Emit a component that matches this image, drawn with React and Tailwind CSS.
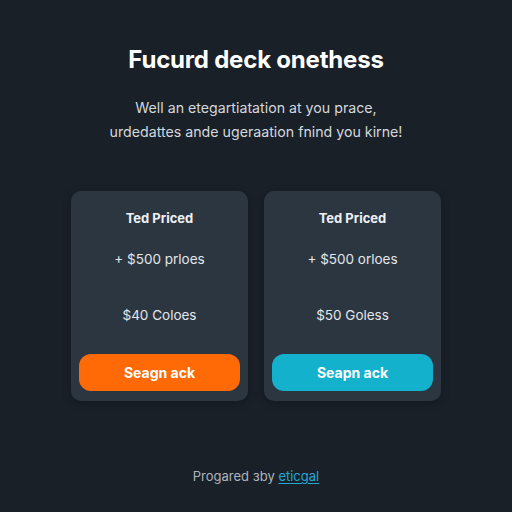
import React from 'react';

const plans = [
    { title: 'Ted Priced', line: '+ $500 prloes', price: '$40 Coloes', cta: 'Seagn ack', btn: 'bg-[#ff6a06]' },
    { title: 'Ted Priced', line: '+ $500 orloes', price: '$50 Goless', cta: 'Seapn ack', btn: 'bg-[#14b1cd]' },
];

const PlanCard = ({ plan }) => (
    <div className="w-[177px] h-[210px] rounded-[10px] bg-[#2c3641] flex flex-col items-center px-2 pb-[10px] shadow-[0_2px_8px_rgba(0,0,0,0.25)]">
        <div className="mt-[18px] text-[13px] font-bold text-[#eef1f4] leading-[18px]">{plan.title}</div>
        <div className="mt-[23px] text-[13.5px] text-[#e3e7eb] leading-[18px]">{plan.line}</div>
        <div className="mt-[38px] text-[13.5px] text-[#e3e7eb] leading-[18px]">{plan.price}</div>
        <button className={`mt-auto w-full h-[37px] rounded-[12px] ${plan.btn} text-white text-[14px] font-bold`}>
            {plan.cta}
        </button>
    </div>
);

export default function App() {
    return (
        <div className="w-[512px] h-[512px] bg-[#1a2028] flex flex-col items-center font-['Inter',sans-serif]">
            <h1 className="mt-[44px] text-[24px] font-bold text-white leading-[32px] tracking-[-0.2px]">Fucurd deck onethess</h1>
            <p className="mt-[20px] text-[14.2px] text-[#d4d9de] text-center leading-[24px]">
                Well an etegartiatation at you prace,<br />
                urdedattes ande ugeraation fnind you kirne!
            </p>
            <div className="mt-[47px] flex gap-4">
                {plans.map((p, i) => <PlanCard key={i} plan={p} />)}
            </div>
            <div className="mt-[66px] text-[13px] text-[#aeb5bc]">
                Progared ɜby <span className="text-[#1fa9d6] underline underline-offset-2">eticgal</span>
            </div>
        </div>
    );
}
